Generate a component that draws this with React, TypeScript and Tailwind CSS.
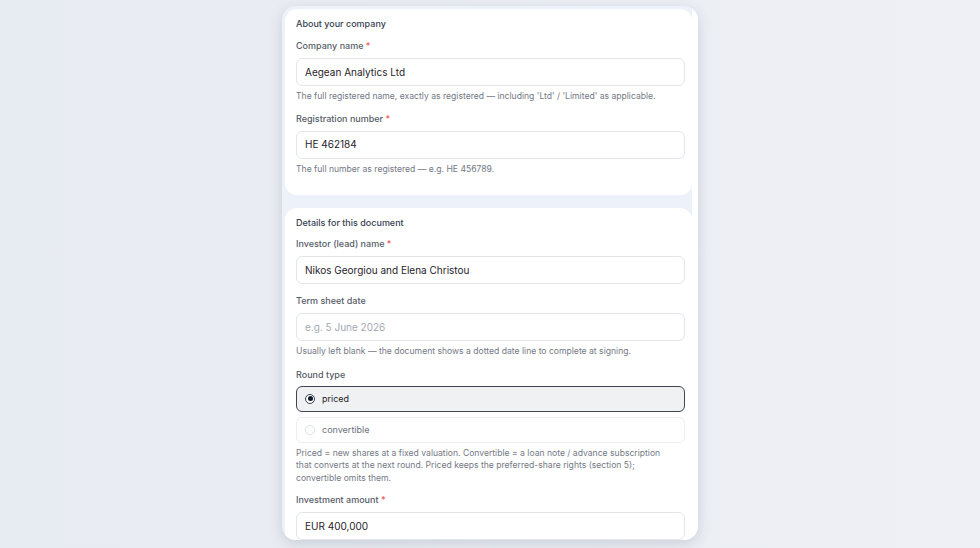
import React from "react";

function Label({ children, required }: { children: React.ReactNode; required?: boolean }) {
  return (
    <div className="text-[9px] leading-[12px] font-medium text-[#565c67]">
      {children}
      {required && <span className="text-[#ef5350]"> *</span>}
    </div>
  );
}

function Field({ value, placeholder }: { value?: string; placeholder?: string }) {
  return (
    <div className="mt-[6px] flex h-[28px] items-center rounded-[6px] border border-[#e2e5ea] bg-white px-[8px] text-[10px]">
      {value ? (
        <span className="text-[#1f2329]">{value}</span>
      ) : (
        <span className="text-[#a3a9b3]">{placeholder}</span>
      )}
    </div>
  );
}

function Help({ children }: { children: React.ReactNode }) {
  return (
    <p className="mt-[4px] text-[8.6px] leading-[12.5px] text-[#737985]">{children}</p>
  );
}

function Option({ label, selected }: { label: string; selected?: boolean }) {
  return (
    <div
      className={
        selected
          ? "flex h-[26px] items-center gap-[7px] rounded-[6px] border border-[#3f4650] bg-[#f0f1f3] px-[8px]"
          : "flex h-[26px] items-center gap-[7px] rounded-[6px] border border-[#eceef1] bg-white px-[8px]"
      }
    >
      {selected ? (
        <span className="flex h-[10px] w-[10px] items-center justify-center rounded-full border-[1.5px] border-[#374151] bg-white">
          <span className="h-[5px] w-[5px] rounded-full bg-[#111827]" />
        </span>
      ) : (
        <span className="h-[10px] w-[10px] rounded-full border border-[#dcdfe4] bg-white" />
      )}
      <span className={selected ? "text-[9px] text-[#1f2329]" : "text-[9px] text-[#6b7280]"}>
        {label}
      </span>
    </div>
  );
}

function Card({ title, children }: { title: string; children: React.ReactNode }) {
  return (
    <section className="rounded-[12px] bg-white pl-[11px] pr-[7px] pt-[9px] pb-[20px]">
      <h2 className="text-[9px] leading-[12px] font-medium text-[#374151]">{title}</h2>
      {children}
    </section>
  );
}

export default function App() {
  return (
    <div className="flex h-[548px] w-[980px] justify-center overflow-hidden bg-gradient-to-r from-[#e7ebf2] to-[#eef0f5] pt-[6px] font-['Inter','Noto_Sans',sans-serif]">
      {/* Form panel */}
      <div className="flex h-[534px] w-[416px] overflow-hidden rounded-[14px] bg-[#edf1f9] shadow-[0_4px_14px_rgba(60,70,100,0.18)]">
        <div className="flex flex-1 flex-col gap-[13px] pl-[3px] pt-[3px]">
          <Card title="About your company">
            <div className="mt-[10px]">
              <Label required>Company name</Label>
              <Field value="Aegean Analytics Ltd" />
              <Help>The full registered name, exactly as registered — including 'Ltd' / 'Limited' as applicable.</Help>
            </div>
            <div className="mt-[10px]">
              <Label required>Registration number</Label>
              <Field value="HE 462184" />
              <Help>The full number as registered — e.g. HE 456789.</Help>
            </div>
          </Card>

          <Card title="Details for this document">
            <div className="mt-[9px]">
              <Label required>Investor (lead) name</Label>
              <Field value="Nikos Georgiou and Elena Christou" />
            </div>
            <div className="mt-[11px]">
              <Label>Term sheet date</Label>
              <Field placeholder="e.g. 5 June 2026" />
              <Help>Usually left blank — the document shows a dotted date line to complete at signing.</Help>
            </div>
            <div className="mt-[11px]">
              <Label>Round type</Label>
              <div className="mt-[5px] flex flex-col gap-[5px]">
                <Option label="priced" selected />
                <Option label="convertible" />
              </div>
              <Help>
                Priced = new shares at a fixed valuation. Convertible = a loan note / advance subscription
                <br />
                that converts at the next round. Priced keeps the preferred-share rights (section 5);
                <br />
                convertible omits them.
              </Help>
            </div>
            <div className="mt-[10px]">
              <Label required>Investment amount</Label>
              <Field value="EUR 400,000" />
            </div>
          </Card>
        </div>
        {/* scrollbar track */}
        <div className="w-[6px] bg-white" />
      </div>
    </div>
  );
}
